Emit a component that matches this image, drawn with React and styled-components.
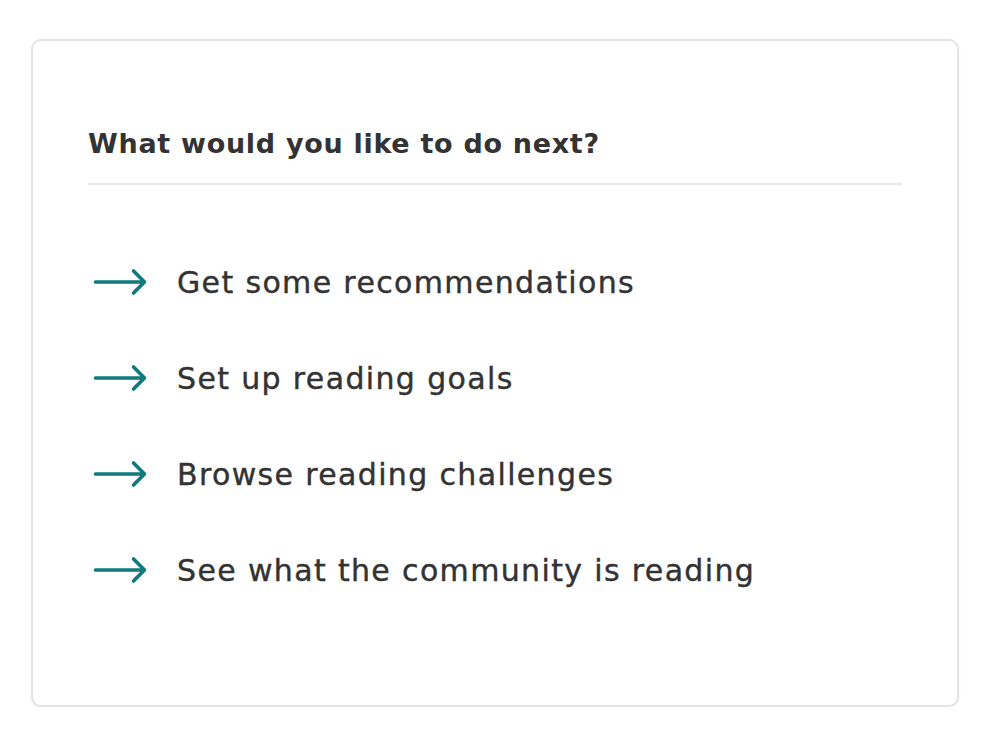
import React from "react";
import styled, { createGlobalStyle } from "styled-components";

const GlobalStyle = createGlobalStyle`
    body {
        margin: 0;
        background: #fff;
        font-family: "DejaVu Sans", "Noto Sans", sans-serif;
        color: #333;
    }
`;

const Page = styled.div`
    padding: 39px 0 0 31px;
`;

const Card = styled.div`
    box-sizing: border-box;
    width: 928px;
    height: 668px;
    border: 2px solid #e4e4e4;
    border-radius: 10px;
    box-shadow: 0 1px 3px rgba(0, 0, 0, 0.06);
    padding: 80px 55px 0 55px;
`;

const Title = styled.h2`
    margin: 0;
    font-size: 27px;
    font-weight: 700;
    letter-spacing: 0.7px;
    line-height: 46px;
    color: #333;
    padding-bottom: 16px;
    border-bottom: 2px solid #e8e8e8;
`;

const List = styled.ul`
    list-style: none;
    margin: 0;
    padding: 73px 0 0 0;
    display: flex;
    flex-direction: column;
    gap: 48px;
`;

const Item = styled.li`
    display: flex;
    align-items: center;
    height: 48px;
    gap: 29px;
    font-size: 30px;
    letter-spacing: 1.35px;
    color: #333;
    -webkit-text-stroke: 0.4px #333;
    cursor: pointer;
`;

const Arrow = () => (
    <svg width="60" height="30" viewBox="0 0 60 30" fill="none">
        <path d="M7.5 15 H56.5 M45.5 4 L56.5 15 L45.5 26" stroke="#117880" strokeWidth="3.6" strokeLinecap="round" strokeLinejoin="round" />
    </svg>
);

const items = [
    "Get some recommendations",
    "Set up reading goals",
    "Browse reading challenges",
    "See what the community is reading",
];

export default function App() {
    return (
        <Page>
            <GlobalStyle />
            <Card>
                <Title>What would you like to do next?</Title>
                <List>
                    {items.map((t) => (
                        <Item key={t}>
                            <Arrow />
                            {t}
                        </Item>
                    ))}
                </List>
            </Card>
        </Page>
    );
}
